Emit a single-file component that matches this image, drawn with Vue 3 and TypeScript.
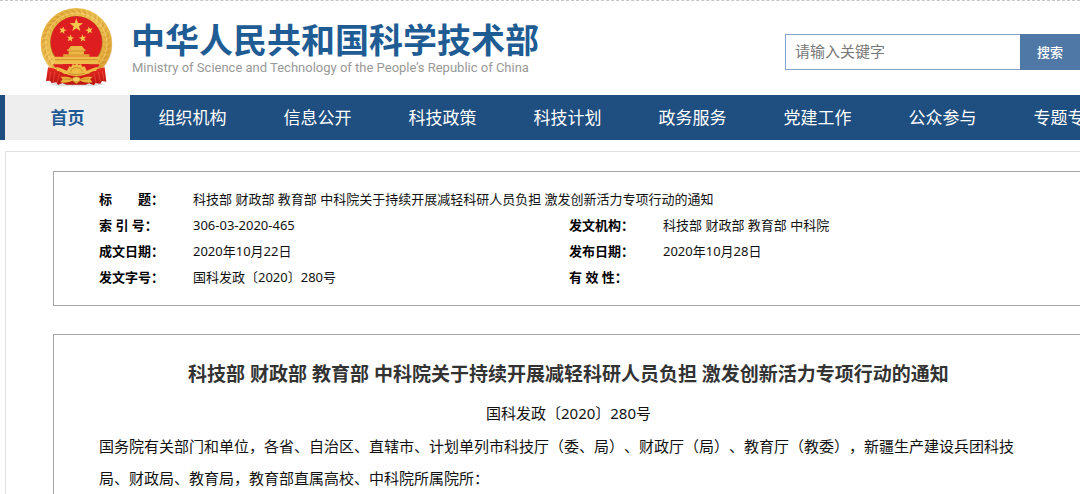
<script setup lang="ts">
import { ref } from 'vue'

const keyword = ref('')
const navItems: string[] = ['首页', '组织机构', '信息公开', '科技政策', '科技计划', '政务服务', '党建工作', '公众参与', '专题专栏']
const title = '科技部 财政部 教育部 中科院关于持续开展减轻科研人员负担 激发创新活力专项行动的通知'

interface Star { x: number; y: number; r: number; turn: number }
const stars: Star[] = [
  { x: 121, y: 64, r: 21, turn: 0 },
  { x: 80, y: 79, r: 12, turn: 12 },
  { x: 160, y: 79, r: 12, turn: -12 },
  { x: 103, y: 103, r: 12, turn: 8 },
  { x: 140, y: 103, r: 12, turn: -8 },
]

function starPoints(s: Star): string {
  return Array.from({ length: 10 }, (_, i) => {
    const a = ((i * 36 - 90 + s.turn) * Math.PI) / 180
    const r = i % 2 ? s.r * 0.4 : s.r
    return `${(s.x + r * Math.cos(a)).toFixed(1)},${(s.y + r * Math.sin(a)).toFixed(1)}`
  }).join(' ')
}

const grains = Array.from({ length: 36 }, (_, i) => i * 10)
</script>

<template>
  <div class="page">
    <header class="top">
      <a class="brand" href="#">
        <svg class="emblem" viewBox="0 0 252 252" aria-hidden="true">
          <defs>
            <linearGradient id="gold" x1="0" y1="0" x2="1" y2="1">
              <stop offset="0" stop-color="#e3aa36" />
              <stop offset="0.45" stop-color="#f1c55a" />
              <stop offset="1" stop-color="#dc9a2a" />
            </linearGradient>
            <linearGradient id="cloth" x1="0" y1="0" x2="0" y2="1">
              <stop offset="0" stop-color="#e62a22" />
              <stop offset="1" stop-color="#b9120f" />
            </linearGradient>
          </defs>
          <ellipse cx="122" cy="240" rx="80" ry="7" fill="#000" opacity="0.13" />
          <circle cx="122" cy="122" r="107" fill="#9b7a3c" opacity="0.3" />
          <circle cx="121" cy="119" r="107" fill="url(#gold)" />
          <g fill="none" stroke="#b97716" stroke-width="3" opacity="0.35">
            <path v-for="g in grains" :key="g" d="M109 17q12 5 7 18M122 16q4 8 14 12" :transform="`rotate(${g} 121 119)`" />
          </g>
          <circle cx="121" cy="119" r="92" fill="none" stroke="#fbe08c" stroke-width="3" opacity="0.5" />
          <circle cx="121" cy="115" r="79" fill="#b8791f" />
          <circle cx="121" cy="114" r="77" fill="#dd1d20" />
          <polygon v-for="(s, i) in stars" :key="i" :points="starPoints(s)" fill="#f6c84d" />
          <path d="M98 136l6-10h34l7 10h3v5h-54v-5zM98 141h46v10h16v7H82v-7h16z" fill="#edb745" />
          <path d="M53 158h137v8h-5v14H57v-14h-4z" fill="#efbd4c" />
          <path d="M94 141h54M82 153h78M57 167h128" stroke="#c17c18" stroke-width="2" />
          <path d="M51 181h140c-4 8-11 14-19 20H70c-8-6-14-12-19-20z" fill="#d81e1e" />
          <path d="M36 190c18 3 31 8 48 20h74c15-12 31-17 48-20l5 43-13-2-5 8-15-2-4 7-15-6-10 4H91l-12-5-13 6-5-8-14 2-5-7-12 1z" fill="url(#cloth)" />
          <path d="M44 204l-4 26M56 203l-4 31M70 210l-7 27M187 204l6 29M174 208l6 28M199 202l5 27" stroke="#fa6453" stroke-width="3" opacity="0.5" />
          <path d="M60 190c17 0 22 8 33 10l7-13 6 2 4-9 7 3 5-5 6 5 7-3 4 9 7-2 6 13c12-2 18-10 33-10l-5 11c-17-1-25 9-36 12-15 4-30 4-45 0-12-3-21-13-36-12z" fill="#efbd45" />
          <path d="M104 203c1-16 34-16 35 0M97 208q24 8 49 0" fill="none" stroke="#b87518" stroke-width="2" />
          <path d="M73 218c19 0 27 0 37 7l11-7 12 7c12-7 20-7 37-7l-8 8 8 9c-15 2-25 1-37-5l-12 9-12-9c-13 6-23 7-36 5l7-9z" fill="#eab33b" />
          <ellipse cx="121" cy="226" rx="12" ry="8" fill="#f5cc60" stroke="#b87518" stroke-width="2" />
          <path d="M83 224l22 3M159 224l-22 3" stroke="#b87518" stroke-width="2" />
        </svg>
        <span class="names">
          <span class="name-cn">中华人民共和国科学技术部</span>
          <span class="name-en">Ministry of Science and Technology of the People’s Republic of China</span>
        </span>
      </a>
      <form class="search" @submit.prevent>
        <input v-model="keyword" type="text" placeholder="请输入关键字" aria-label="请输入关键字" />
        <button type="submit">搜索</button>
      </form>
    </header>

    <nav class="nav">
      <a v-for="(item, i) in navItems" :key="item" href="#" :class="{ active: i === 0 }">{{ item }}</a>
    </nav>

    <main class="frame">
      <section class="panel meta">
        <table>
          <colgroup>
            <col class="c-label" /><col class="c-value" /><col class="c-label" /><col />
          </colgroup>
          <tbody>
            <tr>
              <th scope="row">标　　题：</th>
              <td colspan="3">{{ title }}</td>
            </tr>
            <tr>
              <th scope="row">索 引 号：</th>
              <td>306-03-2020-465</td>
              <th scope="row">发文机构：</th>
              <td>科技部 财政部 教育部 中科院</td>
            </tr>
            <tr>
              <th scope="row">成文日期：</th>
              <td>2020年10月22日</td>
              <th scope="row">发布日期：</th>
              <td>2020年10月28日</td>
            </tr>
            <tr>
              <th scope="row">发文字号：</th>
              <td>国科发政〔2020〕280号</td>
              <th scope="row">有 效 性：</th>
              <td></td>
            </tr>
          </tbody>
        </table>
      </section>

      <article class="panel doc">
        <h1>{{ title }}</h1>
        <p class="number">国科发政〔2020〕280号</p>
        <p class="text">国务院有关部门和单位，各省、自治区、直辖市、计划单列市科技厅（委、局）、财政厅（局）、教育厅（教委），新疆生产建设兵团科技局、财政局、教育局，教育部直属高校、中科院所属院所：</p>
      </article>
    </main>
  </div>
</template>

<style>
body {
  background: #fff;
}
</style>

<style scoped>
.page {
  box-sizing: border-box;
  height: 100vh;
  border-top: 1px dashed #c4c4c4;
  font-family: "Noto Sans", "Noto Sans CJK SC", sans-serif;
  color: #111;
  overflow: hidden;
  text-spacing-trim: space-all;
}

.top {
  display: flex;
  justify-content: space-between;
  align-items: flex-start;
  height: 94px;
}

.brand {
  display: flex;
  padding: 3px 0 0 36px;
  color: inherit;
  text-decoration: none;
}

.emblem {
  width: 84px;
  height: 84px;
}

.names {
  display: flex;
  flex-direction: column;
  padding: 16px 0 0 11px;
  white-space: nowrap;
}

.name-cn {
  font-size: 34px;
  line-height: 40px;
  font-weight: 700;
  color: #1f5c94;
}

.name-en {
  padding-left: 1px;
  font-family: Roboto, "Noto Sans", sans-serif;
  font-size: 13px;
  line-height: 16px;
  color: #999;
}

.search {
  display: flex;
  flex: 0 0 295px;
  min-width: 0;
  height: 36px;
  margin-top: 33px;
}

.search input {
  box-sizing: border-box;
  flex: 1;
  min-width: 0;
  padding: 0 9px 2px;
  border: 1px solid #86a3c8;
  border-right: 0;
  border-radius: 0;
  font-family: inherit;
  font-size: 15px;
  color: #333;
  outline: none;
}

.search input::placeholder {
  color: #777;
}

.search button {
  flex: 0 0 60px;
  padding: 0 0 2px;
  border: 0;
  background: #4f78a6;
  font-family: inherit;
  font-size: 13px;
  font-weight: 500;
  color: #fff;
}

.nav {
  display: flex;
  height: 45px;
  padding-left: 5px;
  background: #1f4e80;
}

.nav a {
  flex: 0 0 125px;
  font-size: 17px;
  line-height: 45px;
  text-align: center;
  white-space: nowrap;
  color: #fff;
  text-decoration: none;
}

.nav a.active {
  background: #eee;
  font-weight: 700;
  color: #205a94;
}

.frame {
  margin: 11px 0 0 5px;
  padding: 19px 0 0 47px;
  border: solid #e2e2e2;
  border-width: 1px 0 0 1px;
}

.panel {
  margin-right: -4px;
  border: 1px solid #a6a6a6;
}

.meta {
  margin-bottom: 28px;
  padding: 14px 45px 15px;
}

.meta table {
  width: 100%;
  table-layout: fixed;
  border-collapse: collapse;
  font-size: 13px;
  line-height: 26px;
}

.c-label {
  width: 94px;
}

.c-value {
  width: 376px;
}

.meta th,
.meta td {
  height: 26px;
  padding: 0;
  text-align: left;
  white-space: nowrap;
}

.meta th {
  font-weight: 700;
  color: #000;
}

.doc {
  padding: 24px 45px;
}

.doc h1 {
  margin: 0;
  font-size: 19px;
  line-height: 30px;
  text-align: center;
  color: #333;
}

.doc p {
  margin: 0;
  font-size: 15px;
  line-height: 32px;
}

.doc .number {
  margin: 8px 0 1px;
  text-align: center;
}
</style>
